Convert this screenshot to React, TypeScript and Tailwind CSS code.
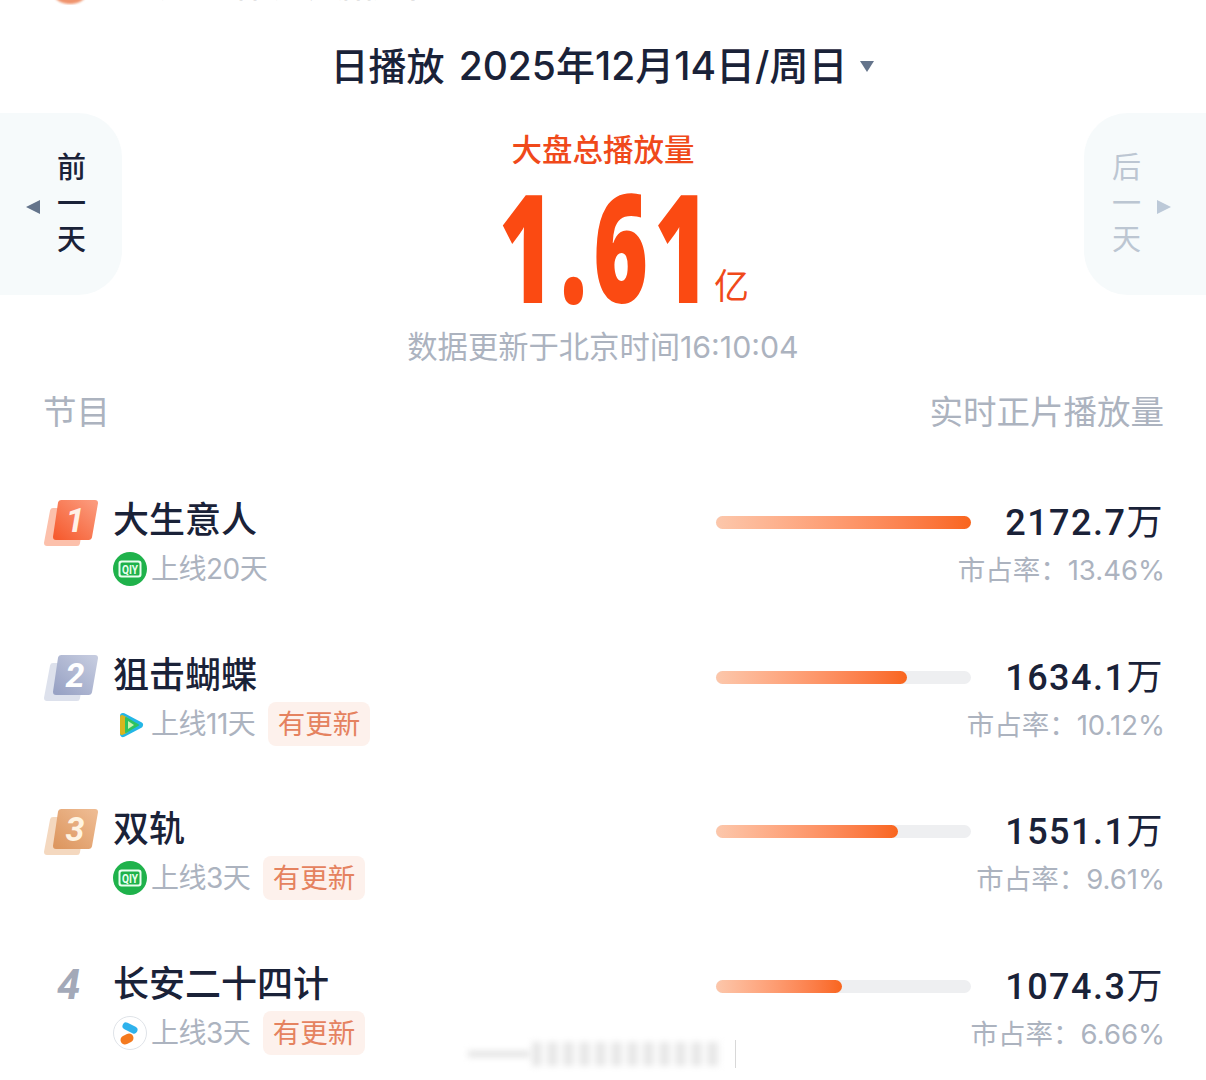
import React from 'react';

const sans = '"Inter", "Noto Sans CJK SC", sans-serif';

type Row = {
  rank: number;
  title: string;
  days: string;
  fresh?: boolean;
  platform: 'iqiyi' | 'tencent' | 'youku';
  value: string;
  share: string;
  pct: number;
};

const rows: Row[] = [
  { rank: 1, title: '大生意人', days: '上线20天', platform: 'iqiyi', value: '2172.7', share: '13.46%', pct: 100 },
  { rank: 2, title: '狙击蝴蝶', days: '上线11天', fresh: true, platform: 'tencent', value: '1634.1', share: '10.12%', pct: 75 },
  { rank: 3, title: '双轨', days: '上线3天', fresh: true, platform: 'iqiyi', value: '1551.1', share: '9.61%', pct: 71.4 },
  { rank: 4, title: '长安二十四计', days: '上线3天', fresh: true, platform: 'youku', value: '1074.3', share: '6.66%', pct: 49.4 },
];

const badgeColors: Record<number, { back: string; from: string; to: string; digit: string }> = {
  1: { back: '#fcc0ab', from: '#f65c30', to: '#fb9a7c', digit: '#fff1e6' },
  2: { back: '#dde1ec', from: '#98a2c4', to: '#c5cbdf', digit: '#ffffff' },
  3: { back: '#f4d8bf', from: '#dd9760', to: '#eebb92', digit: '#fff4e2' },
};

function RankBadge({ rank }: { rank: number }) {
  if (rank > 3) {
    return (
      <div className="w-[53px] pl-[13px] pt-[1px] text-[42px] leading-[46px] font-bold italic text-[#a3a9b8] font-['Roboto']">
        {rank}
      </div>
    );
  }
  const c = badgeColors[rank];
  return (
    <div className="relative mt-[3px] h-[48px] w-[53px]">
      <svg width="56" height="48" viewBox="0 0 56 48" className="absolute left-0 top-0">
        <defs>
          <linearGradient id={`badge-${rank}`} x1="0" y1="1" x2="1" y2="0">
            <stop offset="0" stopColor={c.from} />
            <stop offset="1" stopColor={c.to} />
          </linearGradient>
        </defs>
        <polygon points="9,11 38,11 33,43 3,43" fill={c.back} stroke={c.back} strokeWidth="6" strokeLinejoin="round" />
        <polygon
          points="17,3 51,3 45,37 12,37"
          fill={`url(#badge-${rank})`}
          stroke={`url(#badge-${rank})`}
          strokeWidth="6"
          strokeLinejoin="round"
        />
      </svg>
      <span
        className="absolute left-[18px] top-[-1px] w-[26px] text-center text-[34px] leading-[42px] font-bold italic font-['Roboto']"
        style={{ color: c.digit }}
      >
        {rank}
      </span>
    </div>
  );
}

function PlatformIcon({ platform }: { platform: Row['platform'] }) {
  if (platform === 'iqiyi') {
    return (
      <svg width="34" height="34" viewBox="0 0 34 34">
        <circle cx="17" cy="17" r="17" fill="#1fb24b" />
        <rect x="5.500" y="8.500" width="23" height="17" rx="3" fill="#e9fff0" />
        <rect x="7.500" y="10.500" width="19" height="13" rx="1.500" fill="#1fb24b" />
        <text
          x="17"
          y="21.800"
          textAnchor="middle"
          fontSize="12"
          fontWeight="700"
          fill="#e9fff0"
          fontFamily="Roboto, sans-serif"
          textLength="16"
          lengthAdjust="spacingAndGlyphs"
        >
          QIY
        </text>
      </svg>
    );
  }
  if (platform === 'tencent') {
    return (
      <svg width="34" height="34" viewBox="0 0 34 34">
        <polygon points="10,9 27,18 10,27" fill="#23b6e6" stroke="#23b6e6" strokeWidth="6" strokeLinejoin="round" />
        <polygon points="9,10 13,12 13,24 9,26" fill="#d9b51f" stroke="#d9b51f" strokeWidth="4" strokeLinejoin="round" />
        <polygon points="13,11 25,18 13,25" fill="#2fc35e" stroke="#2fc35e" strokeWidth="2" strokeLinejoin="round" />
        <polygon points="15,14 21,18 15,22" fill="#c8f4b0" />
      </svg>
    );
  }
  return (
    <svg width="34" height="34" viewBox="0 0 34 34">
      <circle cx="17" cy="17" r="16.500" fill="#fff" stroke="#dfe3e8" />
      <path d="M13 10l8 4" stroke="#2fb2ec" strokeWidth="7" strokeLinecap="round" />
      <path d="M12 24l4-2" stroke="#f47a1f" strokeWidth="9" strokeLinecap="round" />
    </svg>
  );
}

function RankRow({ row }: { row: Row }) {
  return (
    <div className="flex h-[154.500px] pl-[44px] pr-[42px]">
      <div className="flex w-[672px] shrink-0">
        <RankBadge rank={row.rank} />
        <div className="ml-[16px]">
          <div className="h-[46px] text-[36px] leading-[46px] font-medium text-[#1a2238]">{row.title}</div>
          <div className="mt-[4px] flex h-[44px] items-center">
            <PlatformIcon platform={row.platform} />
            <span className="ml-[4px] text-[28px] text-[#acb3bf] tracking-[-0.5px]">{row.days}</span>
            {row.fresh && (
              <span className="ml-[13px] h-[44px] rounded-[8px] bg-[#fdf1ec] px-[9.500px] text-[27.500px] leading-[44px] text-[#e5825f]">
                有更新
              </span>
            )}
          </div>
        </div>
      </div>
      <div className="shrink-0 pt-[19px]">
        <div className="h-[13px] w-[255px] rounded-full bg-[#eeeff1]">
          <div
            className="h-full rounded-full bg-gradient-to-r from-[#fcc7ab] to-[#f9651c]"
            style={{ width: `${row.pct}%` }}
          />
        </div>
      </div>
      <div className="flex min-w-0 flex-1 flex-col items-end">
        <div className="mt-[3px] h-[46px] text-[36px] leading-[46px] text-[#1a2238] tracking-[1.500px] whitespace-nowrap font-['Roboto','Noto_Sans_CJK_SC',sans-serif]">
          <span className="font-medium">{row.value}</span>
          <span className="font-normal">万</span>
        </div>
        <div className="mt-[2px] mr-[-1px] text-[27.500px] leading-[44px] text-[#acb3bf] whitespace-nowrap">
          市占率：{row.share}
        </div>
      </div>
    </div>
  );
}

export default function App() {
  return (
    <div className="relative h-[1080px] w-[1206px] overflow-hidden bg-white" style={{ fontFamily: sans }}>
      {/* clipped app header */}
      <div className="relative h-[5px] overflow-hidden">
        <div className="absolute left-[50px] top-[-33px] h-[37px] w-[40px] rounded-full bg-[#ec7a4a] opacity-80 blur-[1px]" />
        <div className="absolute left-[158px] top-[-33px] text-[34px] leading-[36px] font-medium text-[#999] whitespace-nowrap">
          实时播放数据榜单
        </div>
      </div>

      <div className="mt-[36px] flex h-[50px] items-center justify-center text-[#1a2238]">
        <span className="text-[38px] leading-[50px] font-medium whitespace-nowrap">日播放</span>
        <span className="ml-[14px] text-[39px] leading-[50px] font-medium whitespace-nowrap">2025年12月14日/周日</span>
        <svg width="16" height="14" viewBox="0 0 16 14" className="ml-[12px]">
          <path d="M1 2h14l-7 11z" fill="#64748b" />
        </svg>
      </div>

      <div className="mt-[22px] flex h-[182px] justify-between">
        <div className="flex w-[122px] items-center justify-end rounded-r-[44px] bg-[#f6fafb] pr-[36px]">
          <svg width="16" height="16" viewBox="0 0 16 16" className="mr-[16px] mt-[5px]">
            <path d="M15 1v14L1 8z" fill="#64748b" />
          </svg>
          <div className="flex flex-col items-center text-[29px] leading-[36px] font-medium text-[#1a2238]">
            <span>前</span>
            <span>一</span>
            <span>天</span>
          </div>
        </div>

        <div className="flex flex-col items-center">
          <div className="mt-[17px] h-[40px] text-[30.500px] leading-[40px] font-medium text-[#f0491a]">大盘总播放量</div>
          <div className="relative mt-[19px] h-[130px] w-[196px]">
            <span className="absolute left-[-6px] top-[-9px] origin-left scale-x-[0.62] text-[151px] leading-[130px] tracking-[10px] font-extrabold font-['Open_Sans'] text-[#fb4a12]">
              1.61
            </span>
            <span className="absolute left-[209px] bottom-[-13px] text-[35px] leading-[44px] text-[#f0491a]">亿</span>
          </div>
        </div>

        <div className="flex w-[122px] items-center rounded-l-[44px] bg-[#f6fafb] pl-[28px]">
          <div className="flex flex-col items-center text-[29px] leading-[36px] text-[#bcc6d2]">
            <span>后</span>
            <span>一</span>
            <span>天</span>
          </div>
          <svg width="16" height="16" viewBox="0 0 16 16" className="ml-[15px] mt-[5px]">
            <path d="M1 1v14l14-7z" fill="#bcc9d8" />
          </svg>
        </div>
      </div>

      <div className="mt-[30px] h-[44px] text-center text-[30.300px] leading-[44px] text-[#acb3bf] whitespace-nowrap">数据更新于北京时间16:10:04</div>

      <div className="mt-[21px] flex h-[44px] justify-between pl-[43px] pr-[42px] text-[33.500px] leading-[44px] text-[#acb3bf]">
        <span>节目</span>
        <span>实时正片播放量</span>
      </div>

      <div className="mt-[63px]">
        {rows.map(row => (
          <RankRow key={row.rank} row={row} />
        ))}
      </div>

      {/* blurred watermark */}
      <div className="absolute left-[468px] top-[1040px] flex h-[28px] w-[268px] items-center border-r border-r-[#d8d8d8]">
        <div className="h-[6px] w-[62px] bg-[#e2e2e2] blur-[3px]" />
        <div className="ml-[2px] h-[24px] w-[190px] bg-[repeating-linear-gradient(90deg,#e6e6e6_0_9px,#fbfbfb_9px_16px)] blur-[3px]" />
      </div>
    </div>
  );
}
